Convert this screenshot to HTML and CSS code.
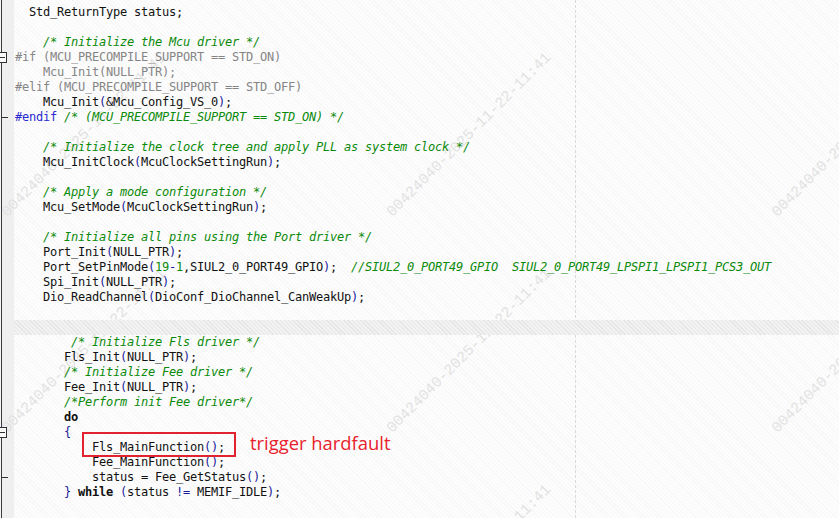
FILE: index.html
```html
<!DOCTYPE html>
<html lang="en">
  <head>
    <meta charset="UTF-8" />
    <title>Fee init - hardfault</title>
    <link rel="stylesheet" href="styles.css">
  </head>
  <body>
    <div class="editor">
      <div class="watermarks">
        <span class="wm" style="left: 10px; top: 220px">00424040-2025-11-22-11:41</span>
        <span class="wm" style="left: 395px; top: 220px">00424040-2025-11-22-11:41</span>
        <span class="wm" style="left: 780px; top: 220px">00424040-2025-11-22-11:41</span>
        <span class="wm" style="left: 10px; top: 436px">00424040-2025-11-22-11:41</span>
        <span class="wm" style="left: 395px; top: 436px">00424040-2025-11-22-11:41</span>
        <span class="wm" style="left: 780px; top: 436px">00424040-2025-11-22-11:41</span>
        <span class="wm" style="left: 395px; top: 652px">00424040-2025-11-22-11:41</span>
      </div>

      <div class="guide"></div>

      <div class="lines">
        <div class="line"><span class="fold"></span><span class="code">  Std_ReturnType status;</span></div>
        <div class="line"><span class="fold"></span><span class="code"></span></div>
        <div class="line"><span class="fold"></span><span class="code">    <span class="c">/* Initialize the Mcu driver */</span></span></div>
        <div class="line"><span class="fold"><span class="fold-box"></span></span><span class="code"><span class="p">#if (MCU_PRECOMPILE_SUPPORT == STD_ON)</span></span></div>
        <div class="line"><span class="fold"></span><span class="code"><span class="p">    Mcu_Init(NULL_PTR);</span></span></div>
        <div class="line"><span class="fold"></span><span class="code"><span class="p">#elif (MCU_PRECOMPILE_SUPPORT == STD_OFF)</span></span></div>
        <div class="line"><span class="fold"></span><span class="code">    Mcu_Init<span class="o">(</span>&amp;Mcu_Config_VS_0<span class="o">)</span>;</span></div>
        <div class="line"><span class="fold"><span class="fold-end"></span></span><span class="code"><span class="d">#endif</span> <span class="c">/* (MCU_PRECOMPILE_SUPPORT == STD_ON) */</span></span></div>
        <div class="line"><span class="fold"></span><span class="code"></span></div>
        <div class="line"><span class="fold"></span><span class="code">    <span class="c">/* Initialize the clock tree and apply PLL as system clock */</span></span></div>
        <div class="line"><span class="fold"></span><span class="code">    Mcu_InitClock<span class="o">(</span>McuClockSettingRun<span class="o">)</span>;</span></div>
        <div class="line"><span class="fold"></span><span class="code"></span></div>
        <div class="line"><span class="fold"></span><span class="code">    <span class="c">/* Apply a mode configuration */</span></span></div>
        <div class="line"><span class="fold"></span><span class="code">    Mcu_SetMode<span class="o">(</span>McuClockSettingRun<span class="o">)</span>;</span></div>
        <div class="line"><span class="fold"></span><span class="code"></span></div>
        <div class="line"><span class="fold"></span><span class="code">    <span class="c">/* Initialize all pins using the Port driver */</span></span></div>
        <div class="line"><span class="fold"></span><span class="code">    Port_Init<span class="o">(</span>NULL_PTR<span class="o">)</span>;</span></div>
        <div class="line"><span class="fold"></span><span class="code">    Port_SetPinMode<span class="o">(</span><span class="n">19</span><span class="o">-</span><span class="n">1</span>,SIUL2_0_PORT49_GPIO<span class="o">)</span>;  <span class="c">//SIUL2_0_PORT49_GPIO  SIUL2_0_PORT49_LPSPI1_LPSPI1_PCS3_OUT</span></span></div>
        <div class="line"><span class="fold"></span><span class="code">    Spi_Init<span class="o">(</span>NULL_PTR<span class="o">)</span>;</span></div>
        <div class="line"><span class="fold"></span><span class="code">    Dio_ReadChannel<span class="o">(</span>DioConf_DioChannel_CanWeakUp<span class="o">)</span>;</span></div>
        <div class="line"><span class="fold"></span><span class="code"></span></div>
        <div class="line"><span class="fold"></span><span class="code band"></span></div>
        <div class="line"><span class="fold"></span><span class="code">        <span class="c">/* Initialize Fls driver */</span></span></div>
        <div class="line"><span class="fold"></span><span class="code">       Fls_Init<span class="o">(</span>NULL_PTR<span class="o">)</span>;</span></div>
        <div class="line"><span class="fold"></span><span class="code">       <span class="c">/* Initialize Fee driver */</span></span></div>
        <div class="line"><span class="fold"></span><span class="code">       Fee_Init<span class="o">(</span>NULL_PTR<span class="o">)</span>;</span></div>
        <div class="line"><span class="fold"></span><span class="code">       <span class="c">/*Perform init Fee driver*/</span></span></div>
        <div class="line"><span class="fold"></span><span class="code">       <span class="k">do</span></span></div>
        <div class="line"><span class="fold"><span class="fold-box"></span></span><span class="code">       <span class="o">{</span></span></div>
        <div class="line"><span class="fold"></span><span class="code">           Fls_MainFunction<span class="o">()</span>;</span></div>
        <div class="line"><span class="fold"></span><span class="code">           Fee_MainFunction<span class="o">()</span>;</span></div>
        <div class="line"><span class="fold"><span class="fold-end"></span></span><span class="code">           status = Fee_GetStatus<span class="o">()</span>;</span></div>
        <div class="line"><span class="fold"></span><span class="code">       <span class="o">}</span> <span class="k">while</span> <span class="o">(</span>status <span class="o">!=</span> MEMIF_IDLE<span class="o">)</span>;</span></div>
      </div>

      <div class="note">
        <div class="note-box"></div>
        <span class="note-text">trigger hardfault</span>
      </div>
    </div>
  </body>
</html>
```

FILE: styles.css
```css
* {
  margin: 0;
  padding: 0;
  box-sizing: border-box;
}

body {
  width: 839px;
  height: 518px;
  overflow: hidden;
  background: #ffffff;
}

.editor {
  position: relative;
  width: 839px;
  height: 518px;
  overflow: hidden;
  background:
    linear-gradient(to right, #f6f6f6 0 1px, #3a3a3a 1px 2px, #efefef 2px 14px, transparent 14px),
    repeating-linear-gradient(45deg, #f7f7f7 0 1px, #fdfdfd 1px 3px);
}

/* watermark layer */
.watermarks {
  position: absolute;
  inset: 0;
  pointer-events: none;
}

.wm {
  position: absolute;
  font-family: "Liberation Mono", monospace;
  font-size: 15px;
  line-height: 15px;
  color: #e2e2e2;
  white-space: nowrap;
  margin-top: -15px;
  transform-origin: 0 100%;
  transform: rotate(-45deg);
}

.guide {
  position: absolute;
  top: 0;
  bottom: 0;
  left: 575px;
  border-left: 1px dashed #dadada;
}

.lines {
  position: relative;
  padding-top: 5px;
}

.line {
  display: flex;
  height: 15px;
  line-height: 15px;
}

.fold {
  width: 14px;
  flex: none;
  display: flex;
  align-items: center;
}

.fold-box {
  width: 7px;
  height: 11px;
  border: 1px solid #333;
  border-left: none;
  background: linear-gradient(#333, #333) 0 50% / 5px 1px no-repeat, #fafafa;
}

.fold-end {
  width: 7px;
  height: 1px;
  margin-left: 1px;
  background: #333;
}

.code {
  flex: 1;
  padding-left: 1px;
  white-space: pre;
  font-family: "DejaVu Sans Mono", monospace;
  font-size: 12px;
  letter-spacing: -0.225px;
  color: #111;
}

.band {
  background: repeating-linear-gradient(45deg, #e6e6e6 0 1px, #f2f2f2 1px 3px);
}

.c {
  color: #0a8a0a;
  font-style: italic;
}

.p {
  color: #858585;
}

.d {
  color: #2a2ad0;
}

.o {
  color: #1a1a9a;
}

.n {
  color: #0a8a0a;
}

.k {
  font-weight: bold;
  color: #111;
}

/* annotation drawn over the code */
.note {
  position: absolute;
  left: 82px;
  top: 432px;
  display: flex;
  align-items: flex-start;
  gap: 14px;
}

.note-box {
  width: 154px;
  height: 25px;
  border: 2px solid #e2222e;
}

.note-text {
  margin-top: -2px;
  font-family: "Open Sans", "Noto Sans", sans-serif;
  font-size: 18.4px;
  line-height: 25px;
  color: #e8222c;
}
```
